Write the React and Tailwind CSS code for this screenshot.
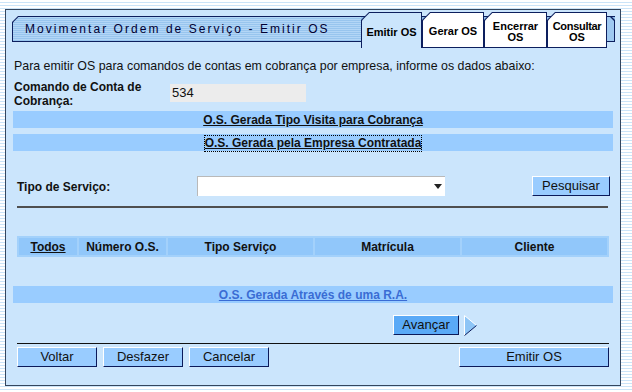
function Tab({ active, w, children }) {
  return (
    <div
      className={`h-[36px] ${w} shrink-0 bg-[#0d1f5e] px-[1px] pt-[1px] [clip-path:polygon(8px_0,100%_0,100%_100%,0_100%,0_8px)] ${active ? "" : "pb-[1px]"}`}
    >
      <div
        className={`flex h-full flex-col items-center justify-center pt-[3px] text-center text-[11px] font-bold leading-[11px] text-black [clip-path:polygon(7.4px_0,100%_0,100%_100%,0_100%,0_7.4px)] ${active ? "bg-[#cbe5fc]" : "bg-white"}`}
      >
        {children}
      </div>
    </div>
  );
}

function Btn({ w, children, bright }) {
  return (
    <div
      className={`flex h-[20px] ${w} items-center justify-center border border-t-white border-l-white border-r-[#0b1a5a] border-b-[#0b1a5a] text-[13px] text-[#111] ${bright ? "bg-[#5aaaf7]" : "bg-[#99ccff]"}`}
    >
      {children}
    </div>
  );
}

function LinkBar({ mt, children, focus, blue }) {
  return (
    <div className={`${mt} mx-[7px] flex h-[17px] items-center justify-center bg-[#99ccff] pt-[1px]`}>
      <span
        className={`text-[12px] font-bold leading-[15px] underline ${blue ? "text-[#3a6cd4]" : "text-[#111]"} ${focus ? "[outline:1px_dotted_#000]" : ""}`}
      >
        {children}
      </span>
    </div>
  );
}

export default function App() {
  return (
    <div className="h-[392px] w-[632px] overflow-hidden pt-[9px] pl-[5px] font-['Liberation_Sans',Arial,sans-serif] [background-image:repeating-linear-gradient(to_bottom,#ffffff_0px,#ffffff_2px,#cbe4f8_2px,#cbe4f8_3px)]">
      <div className="flex h-[377px] w-[616px] flex-col border border-[#34465e] bg-[#cbe5fc]">
        {/* header */}
        <div className="ml-[6px] mt-[2px] flex h-[36px]">
          <div className="mt-[4px] h-[26px] w-[349px] shrink-0 bg-[#0d1f5e] [clip-path:polygon(6px_0,100%_0,100%_100%,0_100%,0_6px)]">
            <div className="ml-[1px] mt-[1px] flex h-[24px] items-center pl-[12px] text-[12px] tracking-[2.05px] text-[#000033] [clip-path:polygon(5.4px_0,100%_0,100%_100%,0_100%,0_5.4px)] [background-image:repeating-linear-gradient(to_bottom,#b3d6f6_0px,#b3d6f6_1px,#98c5ee_1px,#98c5ee_2px)]">
              Movimentar Ordem de Serviço - Emitir OS
            </div>
          </div>
          <div className="flex bg-no-repeat [background-position:0_4px] [background-size:100%_26px] [background-image:linear-gradient(to_bottom,#0d1f5e_0px,#0d1f5e_1px,#8fbde9_1px,#a9d0f4_25px,#0d1f5e_25px,#0d1f5e_26px)]">
            <Tab active w="w-[61px]">Emitir OS</Tab>
            <Tab w="w-[62px]">Gerar OS</Tab>
            <Tab w="w-[63px]">
              <span>Encerrar</span>
              <span>OS</span>
            </Tab>
            <Tab w="w-[60px]">
              <span className="tracking-[-0.3px]">Consultar</span>
              <span>OS</span>
            </Tab>
            <div className="mt-[4px] h-[26px] w-[8px] bg-[#0d1f5e] [clip-path:polygon(0_0,4px_0,100%_4px,100%_100%,0_100%)]">
              <div className="mb-[1px] mr-[1px] mt-[1px] h-[24px] w-[7px] bg-[#9fc9f1] [clip-path:polygon(0_0,3px_0,100%_4px,100%_100%,0_100%)]" />
            </div>
          </div>
        </div>

        {/* intro */}
        <div className="ml-[8px] mt-[10px] text-[12.4px] leading-[16px] text-[#111]">
          Para emitir OS para comandos de contas em cobrança por empresa, informe os dados abaixo:
        </div>

        <div className="ml-[8px] mt-[5px] flex h-[28px]">
          <div className="w-[156px] pt-[1px] text-[12px] font-bold leading-[14px] text-[#111]">
            Comando de Conta de Cobrança:
          </div>
          <div className="mt-[5px] flex h-[18px] w-[136px] items-center bg-[#ececec] pl-[2px] text-[13px] text-[#111]">
            534
          </div>
        </div>

        <LinkBar mt="mt-[4px]">O.S. Gerada Tipo Visita para Cobrança</LinkBar>
        <LinkBar mt="mt-[6px]" focus>
          O.S. Gerada pela Empresa Contratada
        </LinkBar>

        {/* tipo de servico */}
        <div className="ml-[11px] mt-[25px] flex h-[21px] items-start">
          <div className="flex h-[21px] w-[180px] items-center text-[12px] font-bold text-[#111]">
            Tipo de Serviço:
          </div>
          <div className="flex h-[20px] w-[248px] items-center justify-end border-t border-l border-t-[#b9b9b9] border-l-[#b9b9b9] bg-white pr-[3px]">
            <svg width="8" height="5" viewBox="0 0 8 5">
              <polygon points="0,0 8,0 4,5" fill="#222" />
            </svg>
          </div>
          <div className="ml-auto mr-[10px]">
            <Btn w="w-[78px]">Pesquisar</Btn>
          </div>
        </div>

        <div className="ml-[11px] mt-[9px] h-[2px] w-[591px] bg-[#4f4f4f]" />

        {/* table header */}
        <div className="ml-[11px] mt-[28px] flex h-[21px] w-[592px] gap-[2px] bg-[#a3d1fb] p-[2px] text-[12px] font-bold text-[#111]">
          <div className="flex w-[58px] items-center justify-center bg-[#91c7fa] pt-[1px] underline">Todos</div>
          <div className="flex w-[87px] items-center justify-center bg-[#91c7fa] pt-[1px]">Número O.S.</div>
          <div className="flex w-[145px] items-center justify-center bg-[#91c7fa] pt-[1px]">Tipo Serviço</div>
          <div className="flex w-[145px] items-center justify-center bg-[#91c7fa] pt-[1px]">Matrícula</div>
          <div className="flex w-[145px] items-center justify-center bg-[#91c7fa] pt-[1px]">Cliente</div>
        </div>

        <LinkBar mt="mt-[29px]" blue>
          O.S. Gerada Através de uma R.A.
        </LinkBar>

        {/* avancar */}
        <div className="ml-[387px] mt-[12px] flex h-[20px] items-center gap-[5px]">
          <Btn w="w-[66px]" bright>
            Avançar
          </Btn>
          <svg width="13" height="21" viewBox="0 0 13 21">
            <polygon points="0.5,0.5 12.5,10.5 0.5,20.5" fill="#8ec5f6" />
            <polyline points="0.5,20.5 0.5,0.5 12.5,10.5" fill="none" stroke="#ffffff" strokeWidth="1" />
            <polyline points="12.5,10.5 0.5,20.5" fill="none" stroke="#0b1a5a" strokeWidth="1" />
          </svg>
        </div>

        <div className="ml-[11px] mt-[8px] h-[1px] w-[592px] bg-[#111]" />

        <div className="ml-[11px] mt-[3px] flex w-[592px] gap-[6px]">
          <Btn w="w-[80px]">Voltar</Btn>
          <Btn w="w-[80px]">Desfazer</Btn>
          <Btn w="w-[80px]">Cancelar</Btn>
          <div className="ml-auto">
            <Btn w="w-[150px]">Emitir OS</Btn>
          </div>
        </div>
      </div>
    </div>
  );
}
